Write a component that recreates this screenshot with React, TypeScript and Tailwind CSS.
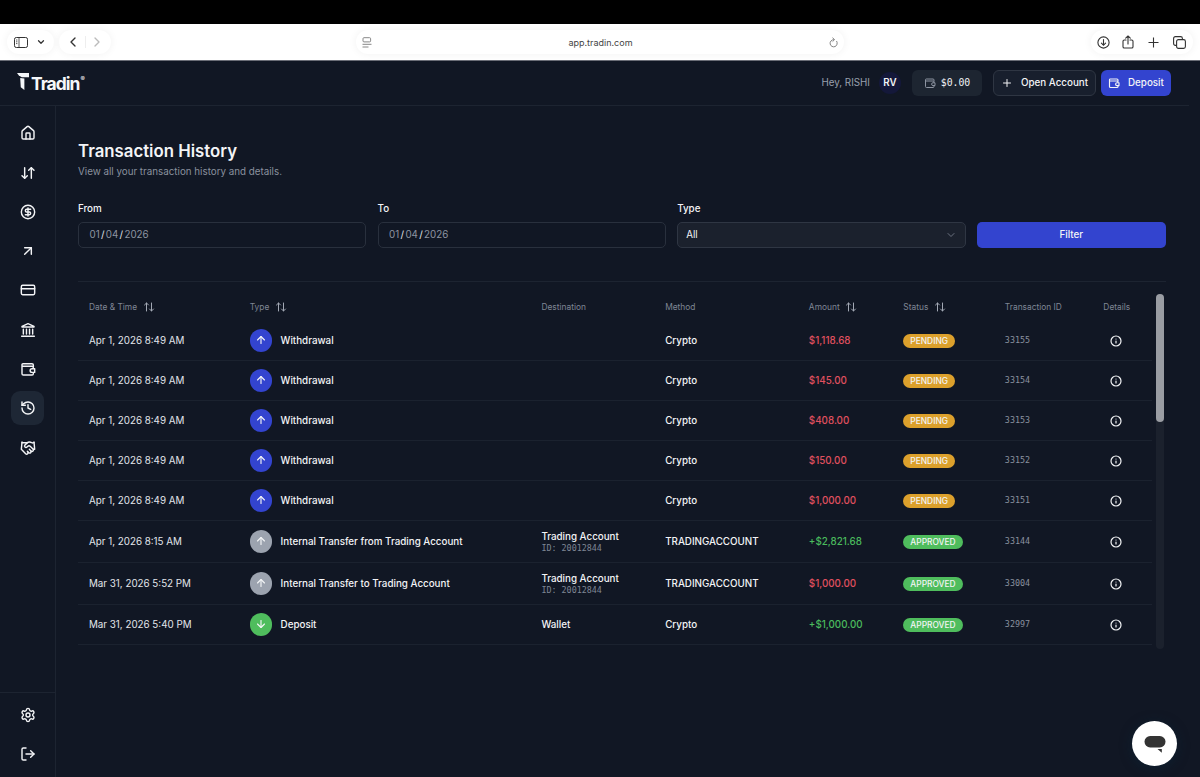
import React from 'react';
import {
  ArrowDown,
  ArrowDownUp,
  ArrowUp,
  ArrowUpDown,
  ArrowUpRight,
  ChevronDown,
  ChevronLeft,
  ChevronRight,
  CircleDollarSign,
  CreditCard,
  Handshake,
  History,
  House,
  Info,
  LogOut,
  Plus,
  Settings,
} from 'lucide-react';

interface Transaction {
  date: string;
  type: string;
  kind: 'out' | 'transfer' | 'in';
  destination?: string;
  account?: string;
  method: string;
  amount: string;
  status: 'PENDING' | 'APPROVED';
  id: string;
}

const transactions: Transaction[] = [
  { date: 'Apr 1, 2026 8:49 AM', type: 'Withdrawal', kind: 'out', method: 'Crypto', amount: '$1,118.68', status: 'PENDING', id: '33155' },
  { date: 'Apr 1, 2026 8:49 AM', type: 'Withdrawal', kind: 'out', method: 'Crypto', amount: '$145.00', status: 'PENDING', id: '33154' },
  { date: 'Apr 1, 2026 8:49 AM', type: 'Withdrawal', kind: 'out', method: 'Crypto', amount: '$408.00', status: 'PENDING', id: '33153' },
  { date: 'Apr 1, 2026 8:49 AM', type: 'Withdrawal', kind: 'out', method: 'Crypto', amount: '$150.00', status: 'PENDING', id: '33152' },
  { date: 'Apr 1, 2026 8:49 AM', type: 'Withdrawal', kind: 'out', method: 'Crypto', amount: '$1,000.00', status: 'PENDING', id: '33151' },
  { date: 'Apr 1, 2026 8:15 AM', type: 'Internal Transfer from Trading Account', kind: 'transfer', destination: 'Trading Account', account: '20012844', method: 'TRADINGACCOUNT', amount: '+$2,821.68', status: 'APPROVED', id: '33144' },
  { date: 'Mar 31, 2026 5:52 PM', type: 'Internal Transfer to Trading Account', kind: 'transfer', destination: 'Trading Account', account: '20012844', method: 'TRADINGACCOUNT', amount: '$1,000.00', status: 'APPROVED', id: '33004' },
  { date: 'Mar 31, 2026 5:40 PM', type: 'Deposit', kind: 'in', destination: 'Wallet', method: 'Crypto', amount: '+$1,000.00', status: 'APPROVED', id: '32997' },
];

const kindColors = {
  out: 'bg-[#3344cf]',
  transfer: 'bg-[#9ca3af]',
  in: 'bg-[#4fbd5d]',
};

const columns = 'grid grid-cols-[160.7px_291.7px_123.8px_143.7px_94.5px_101.5px_98.5px_48px] pl-[11px]';

const WalletIcon = ({ className, strokeWidth = 2 }: { className?: string; strokeWidth?: number }) => (
  <svg viewBox="0 0 24 24" fill="none" stroke="currentColor" strokeWidth={strokeWidth} strokeLinejoin="round" className={className}>
    <path d="M20 9V6a2 2 0 0 0-2-2H4.5A1.5 1.5 0 0 0 3 5.5V19a2 2 0 0 0 2 2h13a2 2 0 0 0 2-2v-1.5M3 8h15a2 2 0 0 1 2 2v1" />
    <path d="M22 11.5h-4a2.8 2.8 0 0 0 0 5.6h4z" />
  </svg>
);

const BankIcon = ({ className, strokeWidth = 2 }: { className?: string; strokeWidth?: number }) => (
  <svg viewBox="0 0 24 24" fill="none" stroke="currentColor" strokeWidth={strokeWidth} strokeLinecap="round" strokeLinejoin="round" className={className}>
    <path d="M3 7.5v-1l9-4 9 4v1zM5 11v7M9.7 11v7M14.3 11v7M19 11v7M2.5 21.5h19" />
  </svg>
);

const Logo = () => (
  <div className="flex items-start text-[#f5f7fa]">
    <svg viewBox="0 0 12 17" className="h-[17px] w-3" fill="currentColor">
      <path d="M0 0h12v4.3H4.8L1.9 2.5z" />
      <path d="M3.2 4.9 7.4 5.6V17L3.8 14.2z" />
    </svg>
    <span className="ml-[2px] mt-[2px] text-[17.5px] leading-[18px] font-bold tracking-[-1px]">Tradin</span>
    <span className="mt-[2px] ml-[1px] text-[6.5px] leading-[8px]">®</span>
  </div>
);

const navItems = [House, ArrowDownUp, CircleDollarSign, ArrowUpRight, CreditCard, BankIcon, WalletIcon, History, Handshake];

const BrowserBar = () => (
  <div className="flex h-[37px] shrink-0 items-center border-b border-[#6b6e77] bg-white px-[7px] text-[#333]">
    <div className="flex h-6 w-[47px] items-center justify-between rounded-full pl-[7px] pr-[8px] shadow-[0_0_8px_rgba(0,0,0,0.06)]">
      <svg viewBox="0 0 14 11" className="h-[11px] w-[14px]" fill="none" stroke="currentColor">
        <rect x=".5" y=".5" width="13" height="10" rx="1.8" />
        <path d="M5 .5v10M2 3h1.4M2 4.8h1.4M2 6.6h1.4" strokeWidth=".8" />
      </svg>
      <ChevronDown className="size-[10px]" strokeWidth={3} />
    </div>
    <div className="ml-[5px] flex h-6 w-[52px] items-center justify-between rounded-full px-[6px] shadow-[0_0_8px_rgba(0,0,0,0.06)]">
      <ChevronLeft className="size-[16px]" strokeWidth={2} />
      <span className="h-3 w-px bg-[#eee]" />
      <ChevronRight className="size-[16px] text-[#bbb]" strokeWidth={2} />
    </div>
    <div className="ml-[245px] flex h-6 w-[488px] items-center justify-between rounded-full px-[6px] shadow-[0_0_8px_rgba(0,0,0,0.06)]">
      <svg viewBox="0 0 10 11" className="h-[11px] w-[10px] text-[#888]" fill="none" stroke="currentColor">
        <rect x="1" y=".7" width="7.6" height="4.2" rx="1" />
        <path d="M.5 7.3h9M.5 10h6" />
      </svg>
      <span className="pt-px text-[9px] text-[#444]">app.tradin.com</span>
      <svg viewBox="0 0 10 11" className="h-[11px] w-[9px] text-[#777]" fill="none" stroke="currentColor" strokeLinecap="round">
        <path d="M8.6 4.2A4 4 0 1 1 5 2.3" />
        <path d="M4.2.5 6.2 2.3 4.3 4.2" />
      </svg>
    </div>
    <div className="ml-auto flex h-6 w-[102px] items-center justify-between rounded-full pl-[5.5px] pr-[7px] shadow-[0_0_8px_rgba(0,0,0,0.06)]">
      <svg viewBox="0 0 13 13" className="size-[13px]" fill="none" stroke="currentColor" strokeWidth="1.1" strokeLinecap="round">
        <circle cx="6.5" cy="6.5" r="5.6" />
        <path d="M6.5 3.5v5.6M4.4 7.2l2.1 2.1 2.1-2.1" />
      </svg>
      <svg viewBox="0 0 12 14" className="-ml-px mb-[1px] h-[14px] w-3" fill="none" stroke="currentColor" strokeWidth="1.1" strokeLinecap="round" strokeLinejoin="round">
        <path d="M4 5H2.3C1.5 5 1 5.500 1 6.300v5.400c0 .8.5 1.300 1.300 1.300h7.400c.8 0 1.300-.5 1.300-1.300V6.300C11 5.500 10.500 5 9.700 5H8M6 9V1M3.700 3.200 6 1l2.300 2.200" />
      </svg>
      <svg viewBox="0 0 11 11" className="size-[11px]" stroke="currentColor" strokeWidth="1.1">
        <path d="M5.5 .5v10M.5 5.5h10" />
      </svg>
      <svg viewBox="0 0 13 13" className="size-[13px]" fill="none" stroke="currentColor" strokeWidth="1.1">
        <rect x="3.6" y="3.6" width="8.8" height="8.8" rx="1.8" />
        <path d="M3.6 9.4H2.4C1.3 9.4.6 8.7.6 7.6V2.4C.6 1.3 1.3.6 2.4.6h5.2c1.1 0 1.8.7 1.8 1.8v1.2" />
      </svg>
    </div>
  </div>
);

const Header = () => (
  <header className="mr-[11px] flex h-[45px] shrink-0 items-center border-b border-[#1d2431]">
    <div className="pl-[17px]">
      <Logo />
    </div>
    <div className="ml-auto flex items-center pr-[18px] font-medium">
      <span className="text-[9.8px] font-normal text-[#99a0ae]">Hey, RISHI</span>
      <span className="ml-[9px] flex size-[22px] items-center justify-center rounded-full bg-[#14183a] text-[9.8px] font-semibold">RV</span>
      <div className="ml-[11px] flex h-[26px] w-[70px] items-center justify-center gap-[5px] rounded-[6px] bg-[#1d2531]">
        <WalletIcon className="size-[12px] text-[#8d94a1]" />
        <span className="font-['DejaVu_Sans_Mono',monospace] text-[9.8px]">$0.00</span>
      </div>
      <button className="ml-[11px] flex h-[26px] w-[103px] items-center gap-[8px] rounded-[6px] border border-[#2f3643] bg-[#181f2d] pl-[7px] text-[9.8px]">
        <Plus className="size-[12px]" />
        Open Account
      </button>
      <button className="ml-[5px] flex h-[26px] w-[70px] items-center gap-[8px] rounded-[6px] bg-[#3344cf] pl-[7px] text-[9.8px]">
        <WalletIcon className="size-[12px]" strokeWidth={2.3} />
        Deposit
      </button>
    </div>
  </header>
);

const Sidebar = () => (
  <aside className="flex w-14 shrink-0 flex-col border-r border-[#1d2431]">
    <nav className="flex flex-col items-center gap-[5.7px] pt-[10.5px]">
      {navItems.map((Icon, i) => (
        <a key={i} className={i === 7 ? 'flex size-[33.6px] items-center justify-center rounded-[9px] bg-[#1e2735]' : 'flex size-[33.6px] items-center justify-center'}>
          <Icon className="size-4" strokeWidth={2.15} />
        </a>
      ))}
    </nav>
    <div className="mt-auto flex h-[85px] flex-col items-center gap-[5.7px] border-t border-[#1d2431] pt-[5px]">
      <a className="flex size-[33.6px] items-center justify-center">
        <Settings className="size-4" strokeWidth={2.15} />
      </a>
      <a className="flex size-[33.6px] items-center justify-center">
        <LogOut className="size-4" strokeWidth={2.15} />
      </a>
    </div>
  </aside>
);

const DateField = ({ label }: { label: string }) => (
  <div className="w-[288.3px]">
    <div className="h-5 text-[9.8px] leading-[14px] font-medium">{label}</div>
    <div className="flex h-[26px] items-center gap-[1.3px] rounded-[5px] border border-[#29303d] pl-[10.5px] text-[9.8px] text-[#8d94a1]">
      <span>01</span>
      <span className="text-[#e5e7eb]">/</span>
      <span>04</span>
      <span className="text-[#e5e7eb]">/</span>
      <span>2026</span>
    </div>
  </div>
);

const SortLabel = ({ children }: { children: React.ReactNode }) => (
  <span className="flex items-center gap-[5.5px]">
    {children}
    <ArrowUpDown className="mb-px size-[12px] text-[#a3a9b5]" />
  </span>
);

const Row = ({ tx }: { tx: Transaction }) => {
  const Arrow = tx.kind === 'in' ? ArrowDown : ArrowUp;

  return (
    <div className={`${columns} items-center border-b border-[#1b222f] text-[9.8px] ${tx.account ? 'h-[42px]' : 'h-10'}`}>
      <span className="pt-[1.5px] text-[#e2e5ea]">{tx.date}</span>
      <span className="flex items-center gap-[8.5px] font-medium">
        <span className={`flex size-[22.4px] items-center justify-center rounded-full ${kindColors[tx.kind]}`}>
          <Arrow className="size-[12px]" strokeWidth={2.3} />
        </span>
        <span className="pt-[1.5px]">{tx.type}</span>
      </span>
      {tx.account ? (
        <span className="font-medium">
          <span className="block leading-[13px]">{tx.destination}</span>
          <span className="block font-['DejaVu_Sans_Mono',monospace] text-[8.4px] leading-[11px] font-normal text-[#7f8694]">ID: {tx.account}</span>
        </span>
      ) : (
        <span className="pt-[1.5px] font-medium">{tx.destination}</span>
      )}
      <span className="pt-[1.5px] font-medium">{tx.method}</span>
      <span className={tx.amount.startsWith('+') ? 'pt-[1.5px] font-medium text-[#4aba5d]' : 'pt-[1.5px] font-medium text-[#e0505f]'}>{tx.amount}</span>
      <span className="flex pt-px">
        <span className={`inline-flex h-[14px] items-center rounded-full px-[7px] pt-px text-[8.4px] font-medium ${tx.status === 'PENDING' ? 'bg-[#dca02c]' : 'bg-[#4fbd5d]'}`}>
          {tx.status}
        </span>
      </span>
      <span className="font-['DejaVu_Sans_Mono',monospace] text-[8.4px] text-[#8a919e]">{tx.id}</span>
      <Info className="ml-[7px] size-[12px]" strokeWidth={2.4} />
    </div>
  );
};

const App: React.FC = () => {
  return (
    <div className="flex h-[777px] w-[1200px] flex-col overflow-hidden bg-[#111724] font-[Inter,sans-serif] text-[#f3f4f6]">
      <div className="h-6 shrink-0 bg-black" />
      <BrowserBar />
      <Header />
      <div className="flex min-h-0 flex-1">
        <Sidebar />
        <main className="w-[1109.5px] pl-[22px] pt-[34px]">
          <h1 className="text-[16.8px] leading-[22px] font-semibold">Transaction History</h1>
          <p className="mt-[3px] text-[9.8px] leading-[14px] text-[#8a919e]">View all your transaction history and details.</p>

          <div className="mt-[23px] flex items-end gap-[11.3px]">
            <DateField label="From" />
            <DateField label="To" />
            <div className="w-[288.5px]">
              <div className="h-5 text-[9.8px] leading-[14px] font-medium">Type</div>
              <div className="flex h-[26px] items-center justify-between rounded-[5px] border border-[#2f3643] bg-[#1b212d] px-[8px] text-[9.8px]">
                All
                <ChevronDown className="size-[12px] text-[#6b7280]" />
              </div>
            </div>
            <button className="h-[26px] flex-1 rounded-[5px] bg-[#3344cf] text-[9.8px] font-medium">Filter</button>
          </div>

          <div className="mt-[33px] flex border-t border-[#1d2431] pt-[12px]">
            <div className="w-[1074px]">
              <div className={`${columns} h-[27px] items-center text-[8.4px] text-[#7f8694]`}>
                <SortLabel>Date &amp; Time</SortLabel>
                <SortLabel>Type</SortLabel>
                <span>Destination</span>
                <span>Method</span>
                <SortLabel>Amount</SortLabel>
                <SortLabel>Status</SortLabel>
                <span>Transaction ID</span>
                <span>Details</span>
              </div>
              {transactions.map((tx) => (
                <Row key={tx.id} tx={tx} />
              ))}
            </div>
            {/* Scrollbar */}
            <div className="ml-[3.5px] h-[355px] w-[8px] rounded-full bg-[#1b212d]">
              <div className="h-[128px] rounded-full bg-[#9a9da3]" />
            </div>
          </div>
        </main>
      </div>

      {/* Support chat launcher */}
      <button className="absolute left-[1132px] top-[721px] flex size-[45px] items-center justify-center rounded-full bg-white shadow-[0_2px_12px_rgba(10,40,60,0.5)]">
        <svg viewBox="0 0 22 18" className="h-[18px] w-[22px]" fill="#333">
          <rect x=".5" y="1" width="21" height="11.5" rx="5.7" />
          <path d="M13.5 14h4.3v3.8z" />
        </svg>
      </button>
    </div>
  );
};

export default App;
